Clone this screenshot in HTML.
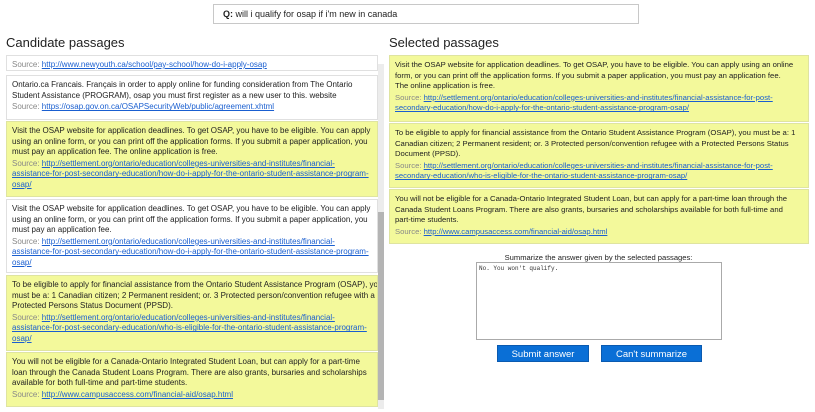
<!DOCTYPE html>
<html><head><meta charset="utf-8"><style>
*{margin:0;padding:0;box-sizing:border-box}
body{width:815px;height:412px;background:#fff;font-family:"Liberation Sans",sans-serif;color:#222;position:relative;overflow:hidden}
.q{position:absolute;left:213px;top:4px;width:426px;height:20px;border:1px solid #c8c8c8;font-size:9px;padding:4px 0 0 9px;white-space:nowrap}
.q b{font-size:9px}
h2{position:absolute;font-weight:normal;font-size:13px;color:#222;white-space:nowrap}
.hint{position:absolute;left:6px;top:56px;font-size:6.3px;color:#333;white-space:nowrap}
.sb{position:absolute;left:378px;top:64px;width:6px;height:345px;background:#ececec}
.sb i{position:absolute;left:0;top:148px;width:6px;height:188px;background:#b4b4b4}
.p{position:absolute;left:6px;width:372px;border:1px solid #e0e0e0;padding:4px 5px;font-size:8px;line-height:10.6px;white-space:nowrap;overflow:hidden}
.y{background:#f3f99b;border-color:#dfe4a0}
.w{background:#fff}
.s{color:#888;margin-top:1px;display:block}
.s a{color:#1a5fd0;text-decoration:underline}
.r{left:389px;width:420px;font-size:7.7px}
.lbl{position:absolute;left:476px;top:253px;width:245px;text-align:center;font-size:7.6px;white-space:nowrap}
textarea{position:absolute;left:476px;top:262px;width:246px;height:78px;border:1px solid #aaa;font-family:"Liberation Mono",monospace;font-size:6px;padding:2px;resize:none;color:#333}
.btn{position:absolute;top:345px;height:17px;background:#0a6fd6;color:#fff;font-size:9.5px;text-align:center;line-height:17px;border:1px solid #0a5ab0}
</style></head><body>
<div class="q"><b>Q:</b> will i qualify for osap if i'm new in canada</div>
<h2 style="left:6px;top:35px">Candidate passages</h2>
<h2 style="left:389px;top:35px">Selected passages</h2>
<div class="hint">Click passages to select or unselect them</div>

<div class="p w" style="top:55px;height:16px;padding-top:3px"><span class="s">Source: <a>http://www.newyouth.ca/school/pay-school/how-do-i-apply-osap</a></span></div>
<div class="p w" style="top:75px;height:45px">Ontario.ca Francais. Français in order to apply online for funding consideration from The Ontario<br>Student Assistance (PROGRAM), osap you must first register as a new user to this. website<span class="s">Source: <a>https://osap.gov.on.ca/OSAPSecurityWeb/public/agreement.xhtml</a></span></div>
<div class="p y" style="top:121px;height:76px">Visit the OSAP website for application deadlines. To get OSAP, you have to be eligible. You can apply<br>using an online form, or you can print off the application forms. If you submit a paper application, you<br>must pay an application fee. The online application is free.<span class="s">Source: <a>http://settlement.org/ontario/education/colleges-universities-and-institutes/financial-<br>assistance-for-post-secondary-education/how-do-i-apply-for-the-ontario-student-assistance-program-<br>osap/</a></span></div>
<div class="p w" style="top:199px;height:74px">Visit the OSAP website for application deadlines. To get OSAP, you have to be eligible. You can apply<br>using an online form, or you can print off the application forms. If you submit a paper application, you<br>must pay an application fee.<span class="s">Source: <a>http://settlement.org/ontario/education/colleges-universities-and-institutes/financial-<br>assistance-for-post-secondary-education/how-do-i-apply-for-the-ontario-student-assistance-program-<br>osap/</a></span></div>
<div class="p y" style="top:275px;height:76px">To be eligible to apply for financial assistance from the Ontario Student Assistance Program (OSAP), you<br>must be a: 1 Canadian citizen; 2 Permanent resident; or. 3 Protected person/convention refugee with a<br>Protected Persons Status Document (PPSD).<span class="s">Source: <a>http://settlement.org/ontario/education/colleges-universities-and-institutes/financial-<br>assistance-for-post-secondary-education/who-is-eligible-for-the-ontario-student-assistance-program-<br>osap/</a></span></div>
<div class="p y" style="top:352px;height:55px">You will not be eligible for a Canada-Ontario Integrated Student Loan, but can apply for a part-time<br>loan through the Canada Student Loans Program. There are also grants, bursaries and scholarships<br>available for both full-time and part-time students.<span class="s">Source: <a>http://www.campusaccess.com/financial-aid/osap.html</a></span></div>
<div class="sb"><i></i></div>

<div class="p y r" style="top:55px;height:67px">Visit the OSAP website for application deadlines. To get OSAP, you have to be eligible. You can apply using an online<br>form, or you can print off the application forms. If you submit a paper application, you must pay an application fee.<br>The online application is free.<span class="s">Source: <a>http://settlement.org/ontario/education/colleges-universities-and-institutes/financial-assistance-for-post-<br>secondary-education/how-do-i-apply-for-the-ontario-student-assistance-program-osap/</a></span></div>
<div class="p y r" style="top:123px;height:65px">To be eligible to apply for financial assistance from the Ontario Student Assistance Program (OSAP), you must be a: 1<br>Canadian citizen; 2 Permanent resident; or. 3 Protected person/convention refugee with a Protected Persons Status<br>Document (PPSD).<span class="s">Source: <a>http://settlement.org/ontario/education/colleges-universities-and-institutes/financial-assistance-for-post-<br>secondary-education/who-is-eligible-for-the-ontario-student-assistance-program-osap/</a></span></div>
<div class="p y r" style="top:189px;height:55px">You will not be eligible for a Canada-Ontario Integrated Student Loan, but can apply for a part-time loan through the<br>Canada Student Loans Program. There are also grants, bursaries and scholarships available for both full-time and<br>part-time students.<span class="s">Source: <a>http://www.campusaccess.com/financial-aid/osap.html</a></span></div>

<div class="lbl">Summarize the answer given by the selected passages:</div>
<textarea>No. You won't qualify.</textarea>
<div class="btn" style="left:497px;width:92px">Submit answer</div>
<div class="btn" style="left:601px;width:101px">Can't summarize</div>
</body></html>
